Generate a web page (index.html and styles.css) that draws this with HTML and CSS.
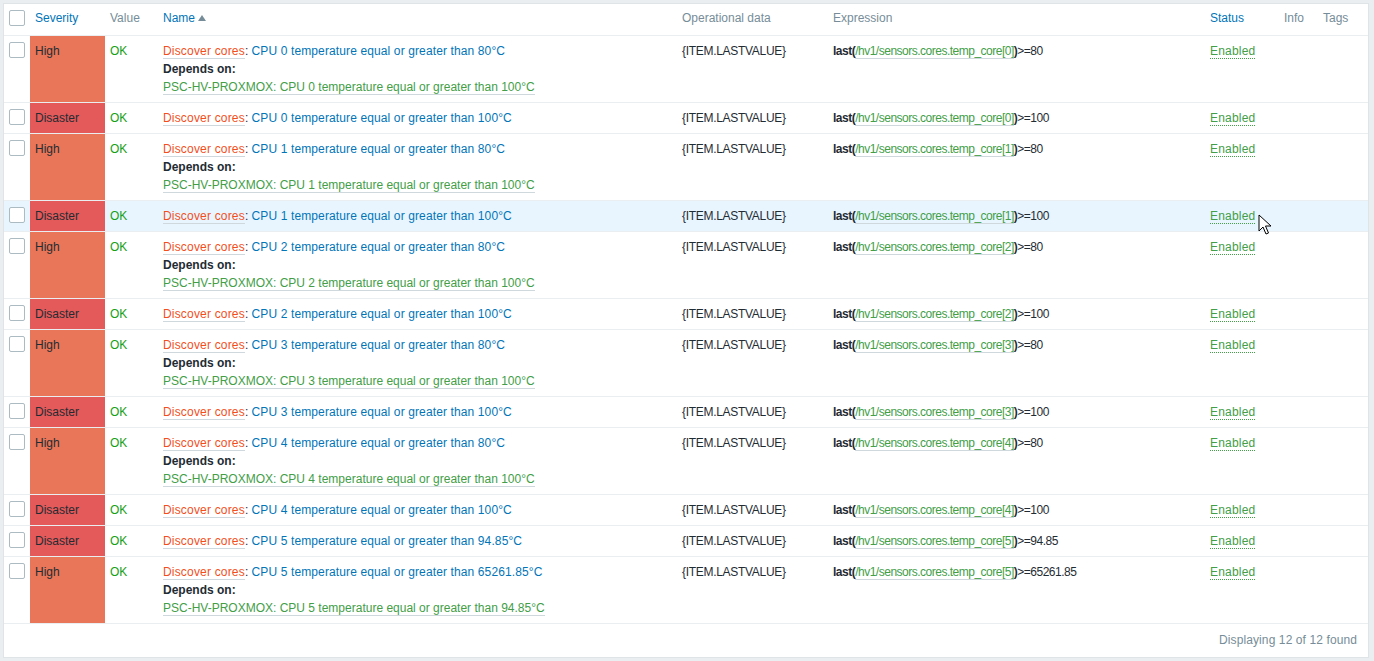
FILE: index.html
```html
<!DOCTYPE html>
<html>
<head>
<meta charset="utf-8">
<link rel="stylesheet" href="styles.css">
</head>
<body>
<div class="panel">
<table class="list">
<colgroup>
<col class="c-chk"><col class="c-sev"><col class="c-val"><col class="c-name"><col class="c-op"><col class="c-expr"><col class="c-status"><col class="c-info"><col class="c-tags">
</colgroup>
<thead>
<tr>
<th><span class="cb"></span></th>
<th class="blue">Severity</th>
<th>Value</th>
<th class="blue">Name <span class="arrow"></span></th>
<th>Operational data</th>
<th>Expression</th>
<th class="blue">Status</th>
<th>Info</th>
<th>Tags</th>
</tr>
</thead>
<tbody>
<tr>
<td><span class="cb"></span></td><td class="sev high">High</td><td class="ok">OK</td>
<td><span class="disc">Discover cores</span>: <span class="lnk">CPU 0 temperature equal or greater than 80°C</span><br><b>Depends on:</b><br><span class="dep">PSC-HV-PROXMOX: CPU 0 temperature equal or greater than 100°C</span></td>
<td class="op">{ITEM.LASTVALUE}</td><td class="expr"><b>last(</b><span class="item">/hv1/sensors.cores.temp_core[0]</span><b>)</b>&gt;=80</td><td><span class="en">Enabled</span></td><td></td><td></td>
</tr>
<tr>
<td><span class="cb"></span></td><td class="sev dis">Disaster</td><td class="ok">OK</td>
<td><span class="disc">Discover cores</span>: <span class="lnk">CPU 0 temperature equal or greater than 100°C</span></td>
<td class="op">{ITEM.LASTVALUE}</td><td class="expr"><b>last(</b><span class="item">/hv1/sensors.cores.temp_core[0]</span><b>)</b>&gt;=100</td><td><span class="en">Enabled</span></td><td></td><td></td>
</tr>
<tr>
<td><span class="cb"></span></td><td class="sev high">High</td><td class="ok">OK</td>
<td><span class="disc">Discover cores</span>: <span class="lnk">CPU 1 temperature equal or greater than 80°C</span><br><b>Depends on:</b><br><span class="dep">PSC-HV-PROXMOX: CPU 1 temperature equal or greater than 100°C</span></td>
<td class="op">{ITEM.LASTVALUE}</td><td class="expr"><b>last(</b><span class="item">/hv1/sensors.cores.temp_core[1]</span><b>)</b>&gt;=80</td><td><span class="en">Enabled</span></td><td></td><td></td>
</tr>
<tr class="hover">
<td><span class="cb"></span></td><td class="sev dis">Disaster</td><td class="ok">OK</td>
<td><span class="disc">Discover cores</span>: <span class="lnk">CPU 1 temperature equal or greater than 100°C</span></td>
<td class="op">{ITEM.LASTVALUE}</td><td class="expr"><b>last(</b><span class="item">/hv1/sensors.cores.temp_core[1]</span><b>)</b>&gt;=100</td><td><span class="en">Enabled</span></td><td></td><td></td>
</tr>
<tr>
<td><span class="cb"></span></td><td class="sev high">High</td><td class="ok">OK</td>
<td><span class="disc">Discover cores</span>: <span class="lnk">CPU 2 temperature equal or greater than 80°C</span><br><b>Depends on:</b><br><span class="dep">PSC-HV-PROXMOX: CPU 2 temperature equal or greater than 100°C</span></td>
<td class="op">{ITEM.LASTVALUE}</td><td class="expr"><b>last(</b><span class="item">/hv1/sensors.cores.temp_core[2]</span><b>)</b>&gt;=80</td><td><span class="en">Enabled</span></td><td></td><td></td>
</tr>
<tr>
<td><span class="cb"></span></td><td class="sev dis">Disaster</td><td class="ok">OK</td>
<td><span class="disc">Discover cores</span>: <span class="lnk">CPU 2 temperature equal or greater than 100°C</span></td>
<td class="op">{ITEM.LASTVALUE}</td><td class="expr"><b>last(</b><span class="item">/hv1/sensors.cores.temp_core[2]</span><b>)</b>&gt;=100</td><td><span class="en">Enabled</span></td><td></td><td></td>
</tr>
<tr>
<td><span class="cb"></span></td><td class="sev high">High</td><td class="ok">OK</td>
<td><span class="disc">Discover cores</span>: <span class="lnk">CPU 3 temperature equal or greater than 80°C</span><br><b>Depends on:</b><br><span class="dep">PSC-HV-PROXMOX: CPU 3 temperature equal or greater than 100°C</span></td>
<td class="op">{ITEM.LASTVALUE}</td><td class="expr"><b>last(</b><span class="item">/hv1/sensors.cores.temp_core[3]</span><b>)</b>&gt;=80</td><td><span class="en">Enabled</span></td><td></td><td></td>
</tr>
<tr>
<td><span class="cb"></span></td><td class="sev dis">Disaster</td><td class="ok">OK</td>
<td><span class="disc">Discover cores</span>: <span class="lnk">CPU 3 temperature equal or greater than 100°C</span></td>
<td class="op">{ITEM.LASTVALUE}</td><td class="expr"><b>last(</b><span class="item">/hv1/sensors.cores.temp_core[3]</span><b>)</b>&gt;=100</td><td><span class="en">Enabled</span></td><td></td><td></td>
</tr>
<tr>
<td><span class="cb"></span></td><td class="sev high">High</td><td class="ok">OK</td>
<td><span class="disc">Discover cores</span>: <span class="lnk">CPU 4 temperature equal or greater than 80°C</span><br><b>Depends on:</b><br><span class="dep">PSC-HV-PROXMOX: CPU 4 temperature equal or greater than 100°C</span></td>
<td class="op">{ITEM.LASTVALUE}</td><td class="expr"><b>last(</b><span class="item">/hv1/sensors.cores.temp_core[4]</span><b>)</b>&gt;=80</td><td><span class="en">Enabled</span></td><td></td><td></td>
</tr>
<tr>
<td><span class="cb"></span></td><td class="sev dis">Disaster</td><td class="ok">OK</td>
<td><span class="disc">Discover cores</span>: <span class="lnk">CPU 4 temperature equal or greater than 100°C</span></td>
<td class="op">{ITEM.LASTVALUE}</td><td class="expr"><b>last(</b><span class="item">/hv1/sensors.cores.temp_core[4]</span><b>)</b>&gt;=100</td><td><span class="en">Enabled</span></td><td></td><td></td>
</tr>
<tr>
<td><span class="cb"></span></td><td class="sev dis">Disaster</td><td class="ok">OK</td>
<td><span class="disc">Discover cores</span>: <span class="lnk">CPU 5 temperature equal or greater than 94.85°C</span></td>
<td class="op">{ITEM.LASTVALUE}</td><td class="expr"><b>last(</b><span class="item">/hv1/sensors.cores.temp_core[5]</span><b>)</b>&gt;=94.85</td><td><span class="en">Enabled</span></td><td></td><td></td>
</tr>
<tr>
<td><span class="cb"></span></td><td class="sev high">High</td><td class="ok">OK</td>
<td><span class="disc">Discover cores</span>: <span class="lnk">CPU 5 temperature equal or greater than 65261.85°C</span><br><b>Depends on:</b><br><span class="dep">PSC-HV-PROXMOX: CPU 5 temperature equal or greater than 94.85°C</span></td>
<td class="op">{ITEM.LASTVALUE}</td><td class="expr"><b>last(</b><span class="item">/hv1/sensors.cores.temp_core[5]</span><b>)</b>&gt;=65261.85</td><td><span class="en">Enabled</span></td><td></td><td></td>
</tr>
</tbody>
</table>
<div class="footer">Displaying 12 of 12 found</div>
</div>
<svg class="cursor" width="14" height="22" viewBox="0 0 14 22"><path d="M1 1 L1 17 L5 13 L8 20 L10.5 19 L7.5 12 L13 12 Z" fill="#fff" stroke="#000" stroke-width="1" stroke-linejoin="miter"/></svg>
</body>
</html>
```
FILE: styles.css
```css
html, body {
  margin: 0;
  padding: 0;
  background: #ebeef0;
}
body {
  padding: 3px 5px 4px 3px;
  font-family: "Liberation Sans", Arial, sans-serif;
  font-size: 12px;
  color: #1f2c33;
  position: relative;
}
.panel {
  background: #fff;
  border: 1px solid #dfe4e7;
}
.list {
  width: 100%;
  border-collapse: collapse;
  table-layout: fixed;
}
.c-chk { width: 26px; }
.c-sev { width: 75px; }
.c-val { width: 53px; }
.c-name { width: 519px; }
.c-op { width: 151px; }
.c-expr { width: 377px; }
.c-status { width: 74px; }
.c-info { width: 39px; }
.c-tags { width: auto; }
.list th {
  text-align: left;
  font-weight: normal;
  color: #768d99;
  padding: 5px 5px 8px;
  line-height: 18px;
  border-bottom: 1px solid #ebeef0;
  white-space: nowrap;
  vertical-align: top;
}
.list th.blue { color: #0275b8; }
.arrow {
  display: inline-block;
  width: 0;
  height: 0;
  border-left: 4px solid transparent;
  border-right: 4px solid transparent;
  border-bottom: 6px solid #768d99;
  vertical-align: 1px;
}
.list td {
  padding: 6px 5px;
  line-height: 18px;
  vertical-align: top;
  border-bottom: 1px solid #ebeef0;
  white-space: nowrap;
  overflow: hidden;
}
.list tr.hover td { background: #e8f5ff; }
.cb {
  display: block;
  width: 14px;
  height: 14px;
  border: 1px solid #acbbc2;
  border-radius: 2px;
  background: #fff;
}
.list th .cb { margin-top: 1px; }
.list td.high, .list tr.hover td.high { background: #e97659; }
.list td.dis, .list tr.hover td.dis { background: #e45959; }
.ok { color: #14a014; }
.disc {
  color: #f24f1d;
  border-bottom: 1px solid #cfd8dd;
  letter-spacing: 0.18px;
}
.lnk {
  color: #0275b8;
  letter-spacing: 0.12px;
}
.dep {
  color: #429e47;
  border-bottom: 1px solid #cfd8dd;
}
.op { letter-spacing: -0.3px; }
.expr { letter-spacing: -0.5px; }
.item {
  color: #429e47;
  border-bottom: 1px solid #cfd8dd;
}
.en {
  color: #429e47;
  border-bottom: 1px dotted #429e47;
  letter-spacing: 0.2px;
}
.footer {
  text-align: right;
  color: #768d99;
  padding: 9px 11px 9px;
  line-height: 15px;
  letter-spacing: 0.1px;
}
.cursor {
  position: absolute;
  left: 1258px;
  top: 214px;
}
```
